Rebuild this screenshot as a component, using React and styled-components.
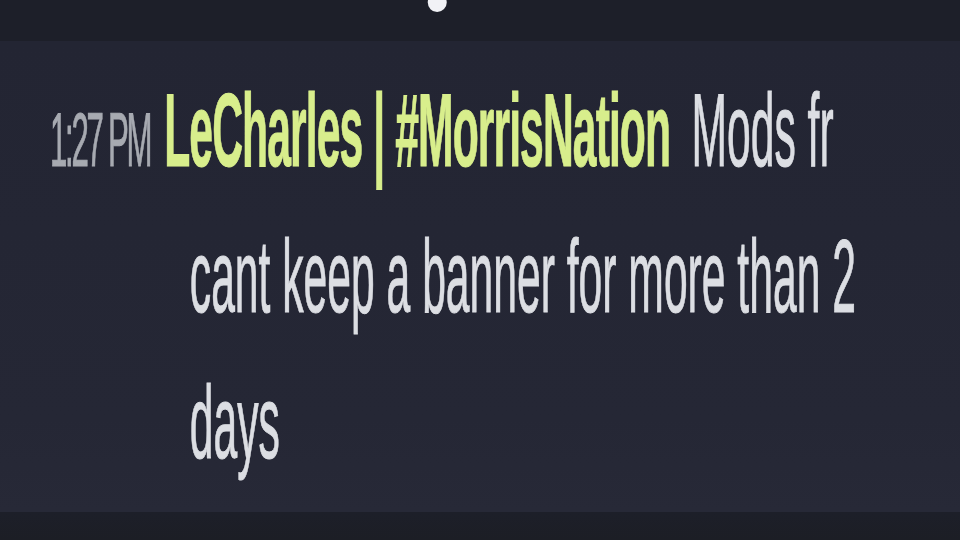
import styled, { createGlobalStyle } from "styled-components";

const SQUEEZE = 0.41;

const GlobalStyle = createGlobalStyle`
  html, body {
    margin: 0;
    padding: 0;
    background: #1d1f29;
    overflow: hidden;
  }
`;

const Page = styled.div`
  width: 960px;
  height: 540px;
  display: flex;
  flex-direction: column;
  overflow: hidden;
  font-family: "Liberation Sans", Arial, sans-serif;
`;

const TopBar = styled.div`
  height: 41px;
  flex-shrink: 0;
  background: #1d1f29;
  overflow: hidden;
`;

// bottom of the previous message, mostly scrolled out of view
const CutLine = styled.div`
  margin-top: -33px;
  padding-left: 425px;
  font-size: 70px;
  line-height: 70px;
  color: #f1f2f6;
`;

const Chat = styled.div`
  flex: 1;
  background: linear-gradient(180deg, #232533 0%, #252735 80%, #272937 100%);
  overflow: hidden;
`;

const Message = styled.div`
  width: ${960 / SQUEEZE}px;
  box-sizing: border-box;
  transform: scaleX(${SQUEEZE});
  transform-origin: left top;
  padding: 16px 171px 0 463px;
  text-indent: -341px;
  font-size: 104px;
  line-height: 146px;
  color: #dcdee3;
  -webkit-text-stroke: 1px currentColor;
`;

const Time = styled.span`
  font-size: 76px;
  line-height: 1;
  letter-spacing: -5.5px;
  color: #a7aab1;
  margin-right: 34px;
`;

const Author = styled.span`
  font-weight: 700;
  letter-spacing: -2.2px;
  color: #d8ee8c;
  margin-right: 52px;
`;

const Composer = styled.div`
  height: 28px;
  flex-shrink: 0;
  background: linear-gradient(180deg, #1d1f29 0%, #1c1e25 100%);
`;

export default function App() {
  return (
    <>
      <GlobalStyle />
      <Page>
        <TopBar>
          <CutLine>•</CutLine>
        </TopBar>
        <Chat>
          <Message>
            <Time>1:27 PM</Time>
            <Author>LeCharles | #MorrisNation</Author>
            Mods fr cant keep a banner for more than 2 days
          </Message>
        </Chat>
        <Composer />
      </Page>
    </>
  );
}
